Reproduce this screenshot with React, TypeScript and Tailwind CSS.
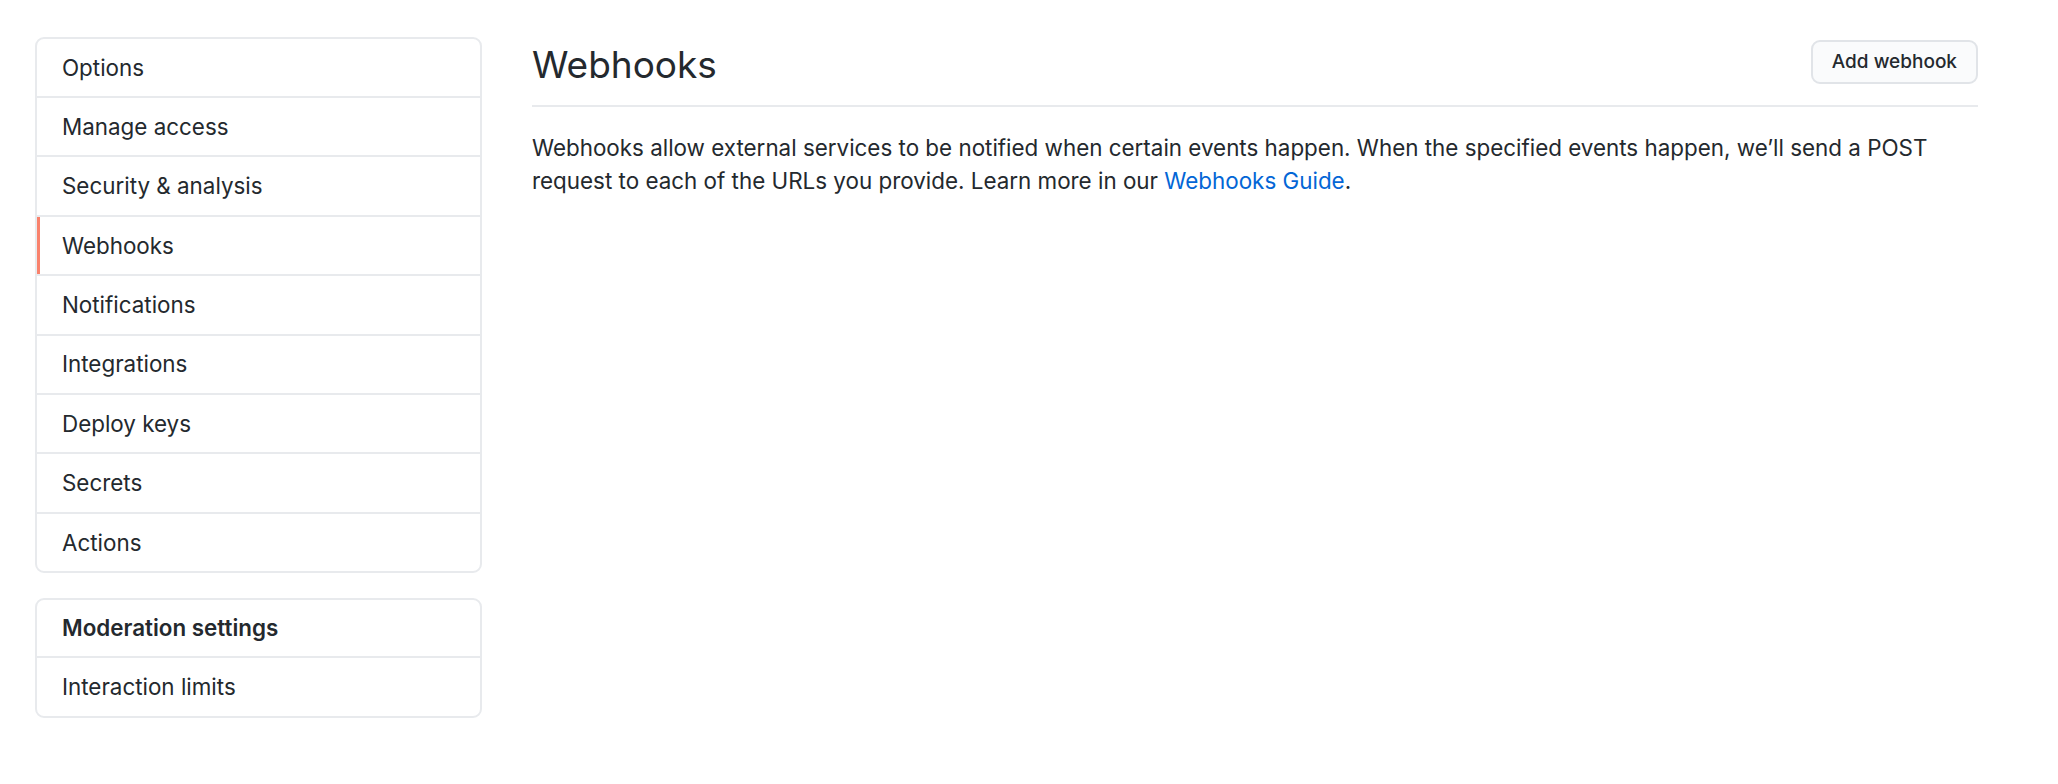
import React from "react";

const menuItems = [
  "Options",
  "Manage access",
  "Security & analysis",
  "Webhooks",
  "Notifications",
  "Integrations",
  "Deploy keys",
  "Secrets",
  "Actions",
];

function MenuRow({ label, selected, first }: { label: string; selected?: boolean; first?: boolean }) {
  return (
    <a
      href="#"
      className={
        "relative flex items-center pl-[25px] text-[22.4px] text-[#24292e] " +
        (first ? "h-[57px]" : "h-[59.4px] border-t-2 border-[#e8eaed]")
      }
    >
      {selected && <span className="absolute left-0 top-0 bottom-0 w-[3px] bg-[#f9826c]" />}
      {label}
    </a>
  );
}

export default function App() {
  return (
    <div
      className="min-h-screen bg-white flex items-start pl-[35px] pt-[37px] text-[#24292e]"
      style={{ fontFamily: 'Inter, "Liberation Sans", sans-serif' }}
    >
      {/* Sidebar */}
      <nav className="w-[447px] shrink-0 flex flex-col gap-[25px]">
        <div className="flex flex-col border-2 border-[#e8eaed] rounded-[9px] overflow-hidden">
          {menuItems.map((item, i) => (
            <MenuRow key={item} label={item} first={i === 0} selected={item === "Webhooks"} />
          ))}
        </div>
        <div className="flex flex-col border-2 border-[#e8eaed] rounded-[9px] overflow-hidden">
          <div className="flex items-center h-[56px] pl-[25px] text-[22.4px] font-semibold">Moderation settings</div>
          <MenuRow label="Interaction limits" />
        </div>
      </nav>

      {/* Main */}
      <main className="ml-[50px] w-[1446px]">
        <div className="flex items-start border-b-2 border-[#e8eaed] pb-[12px] mb-[24px]">
          <h2 className="flex-1 text-[37px] leading-[56px] font-normal">Webhooks</h2>
          <button className="mt-[3px] h-[44px] px-[19px] rounded-[9px] border-2 border-[#e1e4e8] bg-[#fafbfc] text-[19px] font-medium text-[#24292e]">
            Add webhook
          </button>
        </div>
        <p className="text-[22.4px] leading-[33px]">
          Webhooks allow external services to be notified when certain events happen. When the specified events
          happen, we’ll send a POST request to each of the URLs you provide. Learn more in our{" "}
          <a href="#" className="text-[#0366d6]">
            Webhooks Guide
          </a>
          .
        </p>
      </main>
    </div>
  );
}
